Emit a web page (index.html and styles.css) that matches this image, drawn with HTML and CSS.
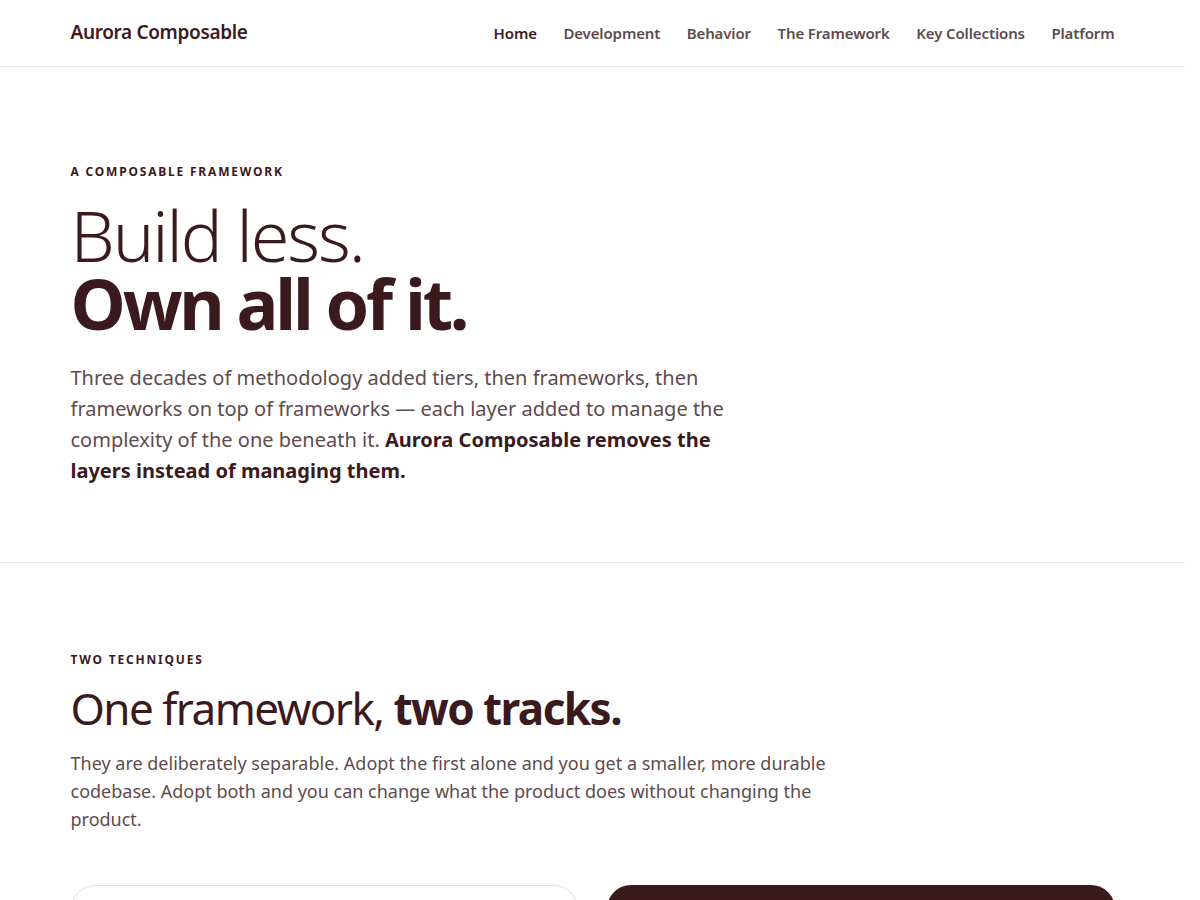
FILE: index.html
```html
<!DOCTYPE html>
<html lang="en">
<head>
<meta charset="utf-8">
<title>Aurora Composable</title>
<link rel="stylesheet" href="styles.css">
</head>
<body>
<div class="page">
  <header class="site-header">
    <div class="container header-inner">
      <a class="logo" href="#">Aurora Composable</a>
      <nav class="nav">
        <a class="nav-link active" href="#">Home</a>
        <a class="nav-link" href="#">Development</a>
        <a class="nav-link" href="#">Behavior</a>
        <a class="nav-link" href="#">The Framework</a>
        <a class="nav-link" href="#">Key Collections</a>
        <a class="nav-link" href="#">Platform</a>
      </nav>
    </div>
  </header>

  <section class="hero">
    <div class="container">
      <p class="eyebrow">A Composable Framework</p>
      <h1 class="hero-title"><span class="light">Build less.</span><span class="heavy">Own all of it.</span></h1>
      <p class="hero-lead">Three decades of methodology added tiers, then frameworks, then frameworks on top of frameworks — each layer added to manage the complexity of the one beneath it. <strong>Aurora Composable removes the layers instead of managing them.</strong></p>
    </div>
  </section>

  <section class="tracks">
    <div class="container">
      <p class="eyebrow">Two Techniques</p>
      <h2 class="section-title">One framework, <strong>two tracks.</strong></h2>
      <p class="section-lead">They are deliberately separable. Adopt the first alone and you get a smaller, more durable codebase. Adopt both and you can change what the product does without changing the product.</p>
      <div class="cards">
        <div class="card card-light"></div>
        <div class="card card-dark"></div>
      </div>
    </div>
  </section>
</div>
</body>
</html>
```

FILE: styles.css
```css
* { box-sizing: border-box; }
html, body { margin: 0; padding: 0; background: #ffffff; }
body {
  font-family: "Noto Sans", "Open Sans", sans-serif;
  color: #3b1a1d;
}
.page { width: 1185px; }
.container {
  width: 1044px;
  margin: 0 auto;
}
.site-header {
  border-bottom: 1px solid #e6e3e3;
}
.header-inner {
  height: 66px;
  display: flex;
  align-items: center;
  justify-content: space-between;
}
.logo {
  font-size: 19px;
  font-weight: 600;
  color: #3b1a1d;
  text-decoration: none;
  letter-spacing: -0.35px;
  margin-top: -2px;
}
.nav {
  display: flex;
  gap: 26.5px;
}
.nav-link {
  font-size: 15px;
  font-weight: 600;
  color: #5e4b4d;
  text-decoration: none;
  letter-spacing: -0.12px;
}
.nav-link.active { color: #3b1a1d; }

.eyebrow {
  margin: 0;
  font-size: 12px;
  line-height: 16px;
  font-weight: 700;
  letter-spacing: 0.15em;
  text-transform: uppercase;
  color: #3b1a1d;
}

.hero {
  padding: 97px 0 76px;
  border-bottom: 1px solid #e6e3e3;
}
.hero-title {
  margin: 21px 0 0;
  font-size: 70px;
  line-height: 68px;
  color: #3b1a1d;
}
.hero-title span { display: block; }
.hero-title .light { font-weight: 300; letter-spacing: -0.03em; }
.hero-title .heavy { font-weight: 700; letter-spacing: -0.046em; }
.hero-lead {
  margin: 25px 0 0;
  max-width: 680px;
  font-size: 20px;
  line-height: 31px;
  color: #5e4b4d;
}
.hero-lead strong { color: #3b1a1d; font-weight: 700; }

.tracks {
  padding: 89px 0 0;
}
.section-title {
  margin: 12px 0 0;
  font-size: 44px;
  line-height: 56px;
  font-weight: 400;
  letter-spacing: -0.035em;
  color: #3b1a1d;
}
.section-title strong { font-weight: 700; }
.section-lead {
  margin: 13px 0 0;
  max-width: 780px;
  font-size: 18px;
  line-height: 28px;
  color: #5e4b4d;
}
.cards {
  margin-top: 52px;
  display: grid;
  grid-template-columns: 1fr 1fr;
  gap: 29px;
}
.card {
  height: 260px;
  border-radius: 24px;
}
.card-light {
  background: #ffffff;
  border: 1px solid #e3dede;
}
.card-dark {
  background: #3a1a1b;
}
```
